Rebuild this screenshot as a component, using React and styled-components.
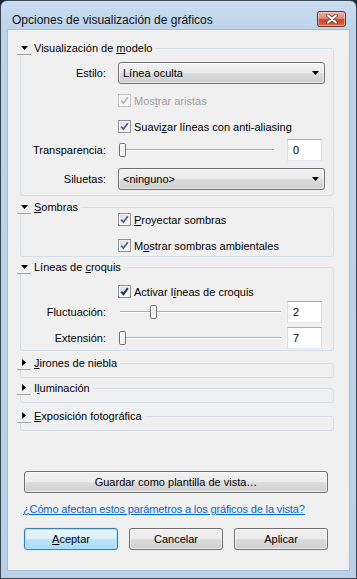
import React from "react"
import styled, { createGlobalStyle } from "styled-components"

const GlobalStyle = createGlobalStyle`
  html, body {
    margin: 0;
    padding: 0;
    background: #202833;
  }
  body {
    font-family: "Liberation Sans", Arial, sans-serif;
    font-size: 11px;
    color: #000;
  }
  * { box-sizing: border-box; }
`

const Window = styled.div`
  width: 357px;
  height: 579px;
  display: flex;
  flex-direction: column;
  border: 1px solid #3b4654;
  border-radius: 7px 7px 0 0;
  background: linear-gradient(180deg, #cadcf0 0%, #bed4eb 5%, #b9d1ea 100%);
  padding: 0 6px 7px 6px;
`

const TitleBar = styled.div`
  height: 28px;
  display: flex;
  align-items: flex-start;
  justify-content: space-between;
  flex: none;
`

const Title = styled.div`
  margin: 12px 0 0 5px;
  font-size: 12px;
  line-height: 14px;
  color: #111;
`

const CloseButton = styled.div`
  width: 29px;
  height: 16px;
  margin: 10px 4px 0 0;
  border: 1px solid #6e3128;
  border-radius: 3px;
  background: linear-gradient(180deg, #eab3a6 0%, #dc8a78 45%, #c9492f 55%, #d6674b 100%);
  box-shadow: inset 0 0 0 1px rgba(255, 220, 210, 0.55);
  display: flex;
  align-items: center;
  justify-content: center;
`

const Client = styled.div`
  flex: 1;
  display: flex;
  flex-direction: column;
  background: #f0f0f0;
  border: 1px solid #a6bdd5;
`

const Groups = styled.div`
  display: flex;
  flex-direction: column;
  padding: 11px 15px 0 12px;
`

const Group = styled.fieldset`
  margin: ${p => p.$mt}px 0 0;
  padding: 0;
  min-width: 0;
  border: 1px solid #d5dfe5;
  border-radius: 3px;
`

const Legend = styled.legend`
  display: flex;
  align-items: center;
  gap: 3px;
  height: 14px;
  line-height: 14px;
  margin-left: -4px;
  padding: 0 3px 0 0;
`

const Toggle = styled.span`
  width: 14px;
  height: 14px;
  display: flex;
  align-items: center;
  justify-content: center;
  border-bottom: 1px solid #a3a3a3;
  background: #f0f0f0;
`

const Body = styled.div`
  display: flex;
  flex-direction: column;
  min-height: ${p => p.$min || 0}px;
  padding-bottom: ${p => p.$pb || 0}px;
`

const FieldRow = styled.div`
  display: flex;
  align-items: center;
  height: 22px;
  margin-top: ${p => p.$mt}px;
`

const Label = styled.span`
  width: 85px;
  flex: none;
  text-align: right;
  margin-right: 12px;
`

const CheckRow = styled.div`
  display: flex;
  align-items: center;
  gap: 3px;
  height: 13px;
  margin: ${p => p.$mt}px 0 0 97px;
  color: ${p => (p.$disabled ? "#a0a0a0" : "#000")};
`

const Box = styled.span`
  width: 13px;
  height: 13px;
  flex: none;
  display: flex;
  align-items: center;
  justify-content: center;
  border: 1px solid ${p => (p.$disabled ? "#c5c5c5" : "#8e8f8f")};
  background: ${p =>
    p.$disabled
      ? "#f4f4f4"
      : "linear-gradient(135deg, #d6d9dd 0%, #eceef0 55%, #fbfbfb 100%)"};
  box-shadow: inset 0 0 0 1px #f6f6f6;
`

const Select = styled.div`
  width: 207px;
  height: 22px;
  display: flex;
  align-items: center;
  justify-content: space-between;
  padding: 0 5px 0 4px;
  border: 1px solid #707070;
  border-radius: 3px;
  background: linear-gradient(180deg, #f2f2f2 0%, #ebebeb 50%, #dddddd 50%, #cfcfcf 100%);
  box-shadow: inset 0 0 0 1px rgba(255, 255, 255, 0.6);
`

const Slider = styled.div`
  position: relative;
  width: ${p => p.$w}px;
  height: 22px;
  flex: none;
`

const Track = styled.div`
  position: absolute;
  left: 2px;
  right: 0;
  top: 10px;
  height: 2px;
  border-top: 1px solid #b0b0b0;
  border-bottom: 1px solid #ffffff;
`

const Thumb = styled.div`
  position: absolute;
  top: 4px;
  width: 7px;
  height: 14px;
  border: 1px solid #707070;
  border-radius: 2px;
  background: linear-gradient(90deg, #fdfdfd 0%, #e6e6e6 100%);
  box-shadow: inset 0 0 0 1px #fff;
`

const ValueBox = styled.div`
  width: 35px;
  height: 22px;
  margin-left: auto;
  margin-right: 11px;
  padding-left: 5px;
  display: flex;
  align-items: center;
  background: #fff;
  border: 1px solid #dbdfe6;
  border-top-color: #abadb3;
  border-bottom-color: #e3e9ef;
`

const Key = styled.span`
  text-decoration: underline;
`

const Spacer = styled.div`
  flex: 1;
`

const Footer = styled.div`
  display: flex;
  flex-direction: column;
  padding: 0 21px 20px 16px;
`

const Button = styled.div`
  height: 22px;
  width: ${p => (p.$wide ? "100%" : "94px")};
  display: flex;
  align-items: center;
  justify-content: center;
  border: 1px solid ${p => (p.$default ? "#3c7fb1" : "#707070")};
  border-radius: 3px;
  background: ${p =>
    p.$default
      ? "linear-gradient(180deg, #eaf6fd 0%, #d9f0fc 50%, #bee6fd 50%, #a7d9f5 100%)"
      : "linear-gradient(180deg, #f2f2f2 0%, #ebebeb 50%, #dddddd 50%, #cfcfcf 100%)"};
  box-shadow: ${p =>
    p.$default
      ? "inset 0 0 0 1px #9fe3fd, 0 0 1px #5ab5e8"
      : "inset 0 0 0 1px rgba(255,255,255,0.65)"};
`

const HelpLink = styled.a`
  margin-top: 10px;
  margin-left: -1px;
  line-height: 13px;
  letter-spacing: -0.14px;
  color: #0066cc;
  text-decoration: underline;
`

const ButtonRow = styled.div`
  display: flex;
  gap: 11px;
  margin-top: 12px;
`

const DownArrow = () => (
  <svg width="7" height="4" viewBox="0 0 7 4">
    <path d="M0 0h7L3.5 4z" fill="#000" />
  </svg>
)

const RightArrow = () => (
  <svg width="4" height="7" viewBox="0 0 4 7">
    <path d="M0 0v7l4-3.5z" fill="#000" />
  </svg>
)

const CloseGlyph = () => (
  <svg width="12" height="10" viewBox="0 0 12 10">
    <path d="M2 1.5l8 7M10 1.5l-8 7" stroke="#5a2a22" strokeWidth="3.6" strokeLinecap="round" />
    <path d="M2 1.5l8 7M10 1.5l-8 7" stroke="#fff" strokeWidth="2.2" strokeLinecap="round" />
  </svg>
)

function Check({ mt, disabled, dark, children }) {
  const color = disabled ? "#b4b4b4" : dark ? "#1d2f74" : "#4a5f8f"
  return (
    <CheckRow $mt={mt} $disabled={disabled}>
      <Box $disabled={disabled}>
        <svg width="9" height="9" viewBox="0 0 9 9">
          <path d="M1.2 4.6l2.2 2.6L7.8 1.2" fill="none" stroke={color} strokeWidth={dark ? 2 : 1.7} />
        </svg>
      </Box>
      <span>{children}</span>
    </CheckRow>
  )
}

function Range({ w, value, max }) {
  const left = 1 + (value / max) * (w - 9)
  return (
    <Slider $w={w}>
      <Track />
      <Thumb style={{ left }} />
    </Slider>
  )
}

function Section({ mt, open, title, children, pb, min }) {
  return (
    <Group $mt={mt}>
      <Legend>
        <Toggle>{open ? <DownArrow /> : <RightArrow />}</Toggle>
        <span>{title}</span>
      </Legend>
      <Body $pb={pb} $min={min}>{children}</Body>
    </Group>
  )
}

export default function App() {
  return (
    <>
      <GlobalStyle />
      <Window>
        <TitleBar>
          <Title>Opciones de visualización de gráficos</Title>
          <CloseButton><CloseGlyph /></CloseButton>
        </TitleBar>
        <Client>
          <Groups>
            <Section mt={0} open pb={5} title={<>Visualización de <Key>m</Key>odelo</>}>
              <FieldRow $mt={7}>
                <Label>Estilo:</Label>
                <Select><span>Línea oculta</span><DownArrow /></Select>
              </FieldRow>
              <Check mt={10} disabled>Mos<Key>t</Key>rar aristas</Check>
              <Check mt={13}>Suavi<Key>z</Key>ar líneas con anti-aliasing</Check>
              <FieldRow $mt={6}>
                <Label>Transparencia:</Label>
                <Range w={156} value={0} max={100} />
                <ValueBox>0</ValueBox>
              </FieldRow>
              <FieldRow $mt={7}>
                <Label>Siluetas:</Label>
                <Select><span>&lt;ninguno&gt;</span><DownArrow /></Select>
              </FieldRow>
            </Section>

            <Section mt={4} open pb={4} title={<><Key>S</Key>ombras</>}>
              <Check mt={-1}><Key>P</Key>royectar sombras</Check>
              <Check mt={13}>M<Key>o</Key>strar sombras ambientales</Check>
            </Section>

            <Section mt={3} open pb={1} title={<>Líneas de <Key>c</Key>roquis</>}>
              <Check mt={11} dark>Activar l<Key>í</Key>neas de croquis</Check>
              <FieldRow $mt={3}>
                <Label>Fluctuación:</Label>
                <Range w={163} value={2} max={10} />
                <ValueBox>2</ValueBox>
              </FieldRow>
              <FieldRow $mt={4}>
                <Label>Extensión:</Label>
                <Range w={163} value={0} max={10} />
                <ValueBox>7</ValueBox>
              </FieldRow>
            </Section>

            <Section mt={5} min={7} title={<><Key>J</Key>irones de niebla</>} />
            <Section mt={3} min={7} title={<>I<Key>l</Key>uminación</>} />
            <Section mt={6} min={7} title={<><Key>E</Key>xposición fotográfica</>} />
          </Groups>

          <Spacer />

          <Footer>
            <Button $wide>Guardar como plantilla de vista…</Button>
            <HelpLink href="#">¿Cómo afectan estos parámetros a los gráficos de la vista?</HelpLink>
            <ButtonRow>
              <Button $default><span><Key>A</Key>ceptar</span></Button>
              <Button>Cancelar</Button>
              <Button>Aplicar</Button>
            </ButtonRow>
          </Footer>
        </Client>
      </Window>
    </>
  )
}
